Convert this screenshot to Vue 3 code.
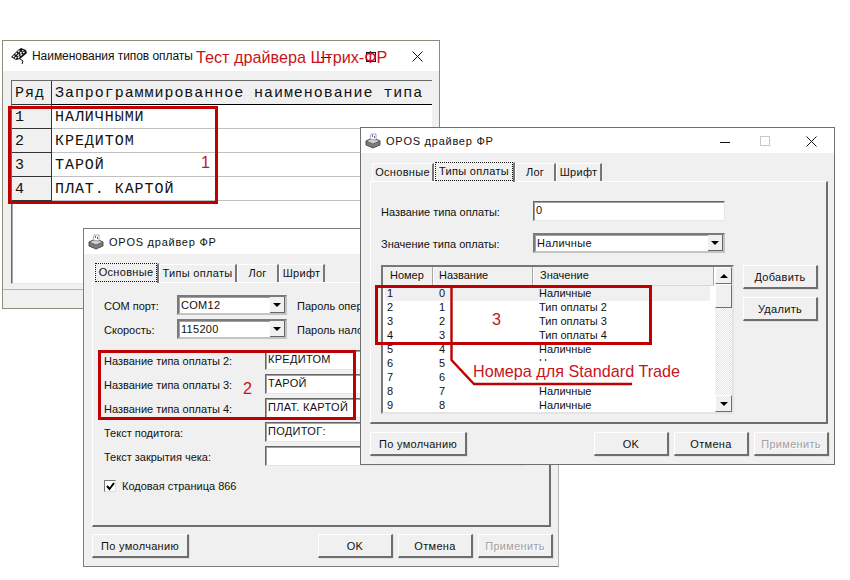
<script setup>
const grid = [['1','НАЛИЧНЫМИ'],['2','КРЕДИТОМ'],['3','ТАРОЙ'],['4','ПЛАТ. КАРТОЙ']]
const tabs = ['Основные','Типы оплаты','Лог','Шрифт']
const tabW = { a: [65,78,42,46], b: [62,81,41,46] }
const textRows = [
  ['Название типа оплаты 2:','КРЕДИТОМ'],
  ['Название типа оплаты 3:','ТАРОЙ'],
  ['Название типа оплаты 4:','ПЛАТ. КАРТОЙ'],
  ['Текст подитога:','ПОДИТОГ:'],
  ['Текст закрытия чека:','']
]
const listRows = [
  ['1','0','Наличные'],['2','1','Тип оплаты 2'],['3','2','Тип оплаты 3'],['4','3','Тип оплаты 4'],
  ['5','4','Наличные'],['6','5','Наличные'],['7','6','Наличные'],['8','7','Наличные'],['9','8','Наличные']
]
</script>

<template>
  <div class="desk">
    <!-- window 1 -->
    <section class="win win1">
      <header class="title">
        <svg class="ico" width="18" height="18" viewBox="0 0 18 18">
          <path d="M1 10 L8 3 L11 1 L16 3 L17 6 L10 12 L6 13 Z" fill="#111"/>
          <path d="M3 10l1.5-1.5M5.5 7.5l1.5-1.5M8 5l1.5-1.5M5 11.5l1.5-1.5M7.5 9l1.5-1.5M10 6.5l1.5-1.5M12 4l1.5-.5M8 11l1.5-1.5M10.5 8.5l1.5-1.5M13 6l1.5-1" stroke="#fff" stroke-width="1.3"/>
          <path d="M10 12 L13 14 L12 17" fill="none" stroke="#111"/>
        </svg>
        <span class="ttl">Наименования типов оплаты</span>
        <i class="min m1"></i><i class="max x1"></i>
        <svg class="close c1" width="11" height="11" viewBox="0 0 11 11"><path d="M.5.5l10 10M10.5.5l-10 10" stroke="#111"/></svg>
      </header>
      <div class="w1body">
        <div class="mono">
          <div class="mrow mhead"><div class="c0">Ряд</div><div class="c1t">Запрограммированное наименование типа</div></div>
          <div v-for="r in grid" :key="r[0]" class="mrow"><div class="c0">{{ r[0] }}</div><div class="c1t">{{ r[1] }}</div></div>
        </div>
      </div>
      <div class="w1foot"></div>
    </section>

    <!-- window 2 -->
    <section class="win win2">
      <header class="title t2">
        <svg class="ico" width="16" height="16" viewBox="0 0 16 16">
          <path d="M1 8 L8 5 L15 8 L15 12 L8 15 L1 12 Z" fill="#7c7c7c" stroke="#333" stroke-width=".8"/>
          <path d="M1 8 L8 11 L15 8 L8 5 Z" fill="#cfcfcf" stroke="#555" stroke-width=".8"/>
          <path d="M5 6 L6 1 L11 1 L11 7 Z" fill="#fff" stroke="#888" stroke-width=".7"/>
          <path d="M7 3h1M9 4h1" stroke="#2233cc" stroke-width="1.3"/>
        </svg>
        <span class="ttl">OPOS драйвер ФР</span>
      </header>
      <div class="body">
        <nav class="tabs">
          <div v-for="(t,i) in tabs" :key="t" class="tab" :class="{ sel: i === 0 }" :style="{ width: tabW.a[i] + 'px' }"><span>{{ t }}</span></div>
        </nav>
        <div class="panel p2">
          <div class="frow f-top">
            <label class="lb l73">COM порт:</label>
            <div class="combo c110"><span>COM12</span><b class="dd"><i></i></b></div>
            <label class="lb after">Пароль оператора:</label>
          </div>
          <div class="frow">
            <label class="lb l73">Скорость:</label>
            <div class="combo c110"><span>115200</span><b class="dd"><i></i></b></div>
            <label class="lb after">Пароль налогового:</label>
          </div>
          <div class="names">
            <div v-for="r in textRows" :key="r[0]" class="frow">
              <label class="lb l161">{{ r[0] }}</label>
              <div class="inp i260">{{ r[1] }}</div>
            </div>
          </div>
          <div class="chk"><span class="box"><svg width="9" height="9" viewBox="0 0 9 9"><path d="M1 4l2.5 3L8 1" fill="none" stroke="#000" stroke-width="2"/></svg></span>Кодовая страница 866</div>
        </div>
        <footer class="foot f2">
          <button class="btn b97">По умолчанию</button>
          <div class="sp"></div>
          <button class="btn b75">OK</button>
          <button class="btn b75">Отмена</button>
          <button class="btn b75 dis">Применить</button>
        </footer>
      </div>
    </section>

    <!-- window 3 -->
    <section class="win win3">
      <header class="title t2">
        <svg class="ico" width="16" height="16" viewBox="0 0 16 16">
          <path d="M1 8 L8 5 L15 8 L15 12 L8 15 L1 12 Z" fill="#7c7c7c" stroke="#333" stroke-width=".8"/>
          <path d="M1 8 L8 11 L15 8 L8 5 Z" fill="#cfcfcf" stroke="#555" stroke-width=".8"/>
          <path d="M5 6 L6 1 L11 1 L11 7 Z" fill="#fff" stroke="#888" stroke-width=".7"/>
          <path d="M7 3h1M9 4h1" stroke="#2233cc" stroke-width="1.3"/>
        </svg>
        <span class="ttl">OPOS драйвер ФР</span>
        <i class="min m3"></i><i class="max x3"></i>
        <svg class="close c3" width="11" height="11" viewBox="0 0 11 11"><path d="M.5.5l10 10M10.5.5l-10 10" stroke="#111"/></svg>
      </header>
      <div class="body b3">
        <nav class="tabs">
          <div v-for="(t,i) in tabs" :key="t" class="tab" :class="{ sel: i === 1 }" :style="{ width: tabW.b[i] + 'px' }"><span>{{ t }}</span></div>
        </nav>
        <div class="panel p3">
          <div class="frow">
            <label class="lb l152">Название типа оплаты:</label>
            <div class="inp i192">0</div>
          </div>
          <div class="frow r12">
            <label class="lb l152">Значение типа оплаты:</label>
            <div class="combo c192"><span>Наличные</span><b class="dd"><i></i></b></div>
          </div>
          <div class="listwrap">
            <div class="list">
              <div class="lmain">
                <div class="lhead"><span class="h1">Номер</span><span class="h2">Название</span><span class="h3">Значение</span></div>
                <div v-for="(r,i) in listRows" :key="r[0]" class="lrow" :class="{ hi: i === 0 }">
                  <span class="h1">{{ r[0] }}</span><span class="h2">{{ r[1] }}</span><span class="h3">{{ r[2] }}</span>
                </div>
              </div>
              <div class="sb">
                <b class="sbtn"><i class="up"></i></b>
                <b class="thumb"></b>
                <div class="track"></div>
                <b class="sbtn"><i></i></b>
              </div>
            </div>
            <div class="side">
              <button class="btn b75">Добавить</button>
              <button class="btn b75">Удалить</button>
            </div>
          </div>
        </div>
        <footer class="foot f3">
          <button class="btn b97">По умолчанию</button>
          <div class="sp"></div>
          <button class="btn b75">OK</button>
          <button class="btn b75">Отмена</button>
          <button class="btn b75 dis">Применить</button>
        </footer>
      </div>
    </section>

    <!-- annotations drawn over the windows -->
    <div class="rect r1"></div>
    <div class="rect r2"></div>
    <div class="rect r3"></div>
    <svg class="lead" width="850" height="580" viewBox="0 0 850 580">
      <path d="M451.5 285V360L474 384H632" fill="none" stroke="#c00000" stroke-width="2.4"/>
    </svg>
    <span class="note n-title">Тест драйвера Штрих-ФР</span>
    <span class="note n1">1</span>
    <span class="note n2">2</span>
    <span class="note n3">3</span>
    <span class="note n-trade">Номера для Standard Trade</span>
  </div>
</template>

<style scoped>
.desk { position: relative; width: 850px; height: 580px; background: #fff; overflow: hidden; font: 11px/14px "Liberation Sans", Arial, sans-serif; color: #111; }
.win { position: absolute; box-sizing: border-box; display: flex; flex-direction: column; background: #f0f0f0; border: 1px solid #7c7c7c; }
.win1 { left: 2px; top: 40px; width: 438px; height: 269px; border-color: #8d8d78; }
.win2 { left: 83px; top: 228px; width: 476px; height: 339px; border-right-color: #b4b4b4; }
.win3 { left: 360px; top: 127px; width: 475px; height: 338px; border-color: #6f6f6f; }
.title { position: relative; flex: none; height: 30px; background: #fff; display: flex; align-items: center; padding-left: 7px; gap: 4px; }
.t2 { height: 25px; padding-left: 4px; gap: 5px; }
.ttl { font-size: 12px; letter-spacing: -.05px; }
.t2 .ttl { font-size: 11px; letter-spacing: .75px; }
.min { position: absolute; height: 1px; width: 10px; background: #111; }
.max { position: absolute; width: 10px; height: 10px; border: 1px solid #111; box-sizing: border-box; }
.close { position: absolute; }
.m1 { left: 318px; top: 16px; } .x1 { left: 363px; top: 11px; } .c1 { left: 409px; top: 10px; }
.m3 { left: 359px; top: 14px; } .x3 { left: 399px; top: 8px; border-color: #c8c8c8; } .c3 { left: 445px; top: 8px; }

/* window 1 grid */
.w1body { flex: 1; margin: 9px 7px 0 8px; background: #fff; border-left: 1px solid #696969; border-top: 1px solid #696969; border-bottom: 1px solid #e8e8e8; box-shadow: inset 1px 1px 0 #a8a8a8; }
.mono { font: 15px/24px "Liberation Mono", "Courier New", monospace; letter-spacing: .95px; }
.mrow { display: flex; height: 24px; border-bottom: 1px solid #c0c0c0; box-sizing: border-box; }
.mhead { border-bottom: 1px solid #000; background: #f0f0f0; }
.c0 { flex: none; width: 40px; box-sizing: border-box; padding: 1px 0 0 3px; background: #f0f0f0; border-right: 1px solid #333; border-bottom: 1px solid #333; margin-bottom: -1px; }
.c1t { padding: 1px 0 0 3px; white-space: nowrap; }
.w1foot { flex: none; height: 18px; border-top: 1px solid #b4b4b4; margin-top: 5px; }

/* tabs and panels */
.body { flex: 1; display: flex; flex-direction: column; padding: 8px 5px 0 8px; }
.b3 { padding-left: 9px; }
.tabs { display: flex; align-items: flex-end; height: 20px; padding-left: 2px; position: relative; z-index: 1; }
.tab { box-sizing: border-box; height: 18px; border-top: 1px solid #fff; border-left: 1px solid #fff; border-right: 2px solid #777; text-align: center; line-height: 17px; white-space: nowrap; letter-spacing: .3px; }
.tab.sel { height: 20px; margin-bottom: -1px; background: #f0f0f0; }
.tab.sel span { display: inline-block; padding: 0 2px; outline: 1px dotted #111; outline-offset: 1px; line-height: 15px; }
.panel { box-sizing: border-box; border: 1px solid; border-color: #fff #6e6e6e #6e6e6e #fff; border-width: 1px 2px 2px 1px; }
.p2 { width: 459px; height: 245px; padding: 12px 0 0 11px; }
.p3 { width: 458px; height: 243px; padding: 19px 0 0 10px; }
.frow { display: flex; align-items: center; height: 20px; margin-bottom: 4px; white-space: nowrap; }
.frow .lb { padding-top: 2px; }
.r12 { margin-top: 12px; margin-bottom: 0; }
.lb { flex: none; display: block; }
.l73 { width: 73px; } .l161 { width: 161px; } .l152 { width: 152px; }
.after { margin-left: 10px; }
.names { margin-top: 11px; }
.inp, .combo { box-sizing: border-box; height: 20px; background: #fff; border: 1px solid; border-color: #666 #e6e6e6 #e6e6e6 #666; box-shadow: inset 1px 1px 0 #a0a0a0; padding-left: 2px; line-height: 17px; position: relative; letter-spacing: .3px; }
.i260 { width: 260px; }
.i192, .c192 { width: 192px; }
.c110 { width: 110px; }
.combo { border: 2px solid; border-color: #7a7a7a #c4c4c4 #c4c4c4 #7a7a7a; line-height: 16px; padding-left: 2px; }
.dd { position: absolute; right: 0; top: 0; width: 15px; height: 16px; background: #f0f0f0; border-right: 1px solid #666; border-bottom: 1px solid #666; box-sizing: border-box; display: flex; align-items: center; justify-content: center; }
.dd i, .sbtn i { width: 0; height: 0; border: 4px solid transparent; border-top: 4px solid #000; border-bottom: 0; }
.sbtn i.up { border-top: 0; border-bottom: 4px solid #000; }
.chk { display: flex; align-items: center; margin-top: 13px; gap: 6px; }
.box { box-sizing: border-box; width: 12px; height: 12px; background: #fff; border: 1px solid; border-color: #777 #ddd #ddd #777; display: flex; align-items: center; justify-content: center; }
.foot { display: flex; gap: 5px; }
.f2 { margin-top: 7px; }
.f3 { margin-top: 8px; }
.sp { flex: 1; }
.btn { box-sizing: border-box; height: 24px; padding: 0; background: #f0f0f0; border: 1px solid; border-color: #fff #6e6e6e #6e6e6e #fff; border-width: 1px 2px 2px 1px; box-shadow: 1px 1px 0 #e0e0e0; font: 11px/18px "Liberation Sans", Arial, sans-serif; letter-spacing: .3px; color: #111; }
.b97 { width: 97px; } .b75 { width: 75px; }
.dis { color: #a0a0a0; text-shadow: 1px 1px 0 #fff; }

/* list */
.listwrap { display: flex; gap: 9px; margin-top: 12px; }
.list { box-sizing: border-box; width: 353px; height: 149px; display: flex; background: #fff; border: 2px solid; border-color: #777 #e4e4e4 #e4e4e4 #777; }
.lmain { flex: 1; overflow: hidden; }
.lhead { display: flex; height: 18px; line-height: 17px; background: #f0f0f0; border-bottom: 1px solid #d8d8d8; }
.lhead span { box-sizing: border-box; border-right: 1px solid #a8a8a8; box-shadow: 1px 0 0 #fff; }
.lrow { display: flex; height: 14px; line-height: 14px; margin-left: 2px; margin-right: 5px; }
.lrow.hi { background: #f0f0f0; height: 15px; margin-bottom: -1px; }
.lrow span { box-sizing: border-box; padding-left: 2px; }
.lrow .h1 { width: 52px; } .lrow .h2 { width: 100px; } .lrow .h3 { flex: 1; }
.lhead .h1 { width: 50px; padding-left: 7px; } .lhead .h2 { width: 100px; padding-left: 6px; } .lhead .h3 { width: 181px; padding-left: 7px; }
.sb { flex: none; width: 17px; display: flex; flex-direction: column; background: #f0f0f0; }
.sbtn, .thumb { box-sizing: border-box; flex: none; display: flex; align-items: center; justify-content: center; width: 17px; border: 1px solid; border-color: #fff #6e6e6e #6e6e6e #fff; background: #f0f0f0; }
.sbtn { height: 17px; }
.thumb { height: 24px; }
.track { flex: 1; background: repeating-conic-gradient(#fff 0 25%, #e4e4e4 0 50%) 0 0 / 2px 2px; }
.side { display: flex; flex-direction: column; gap: 8px; }

/* annotations */
.rect { position: absolute; box-sizing: border-box; border: 3px solid #c00000; }
.r1 { left: 8px; top: 106px; width: 210px; height: 98px; }
.r2 { left: 98px; top: 350px; width: 258px; height: 70px; }
.r3 { left: 375px; top: 285px; width: 277px; height: 60px; }
.lead { position: absolute; left: 0; top: 0; }
.note { position: absolute; color: #c8141c; font: 16.2px/20px "Liberation Sans", Arial, sans-serif; white-space: nowrap; }
.n-title { left: 196px; top: 47px; }
.n1 { left: 201px; top: 152px; }
.n2 { left: 243px; top: 378px; }
.n3 { left: 492px; top: 309px; }
.n-trade { left: 473px; top: 361px; width: 208px; background: #fff; }
</style>
